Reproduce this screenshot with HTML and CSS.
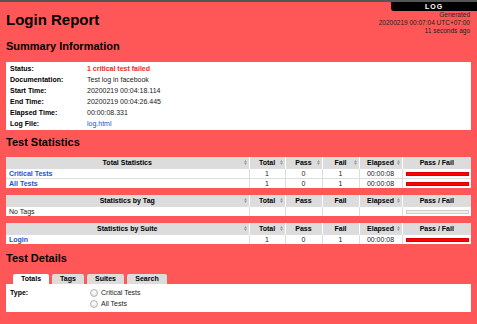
FILE: index.html
```html
<!DOCTYPE html>
<html lang="en">
<head>
    <meta charset="UTF-8">
    <title>Login Report</title>
    <link rel="stylesheet" href="styles.css">
</head>
<body>

<div class="header">
    <h1>Login Report</h1>
    <div class="meta">
        <div class="log-btn">LOG</div>
        <div class="generated">Generated<br>20200219 00:07:04 UTC+07:00<br>11 seconds ago</div>
    </div>
</div>

<div class="content">
    <h2 class="first">Summary Information</h2>
    <table class="summary">
        <tr><th>Status:</th><td class="status-fail">1 critical test failed</td></tr>
        <tr><th>Documentation:</th><td>Test log in facebook</td></tr>
        <tr><th>Start Time:</th><td>20200219 00:04:18.114</td></tr>
        <tr><th>End Time:</th><td>20200219 00:04:26.445</td></tr>
        <tr><th>Elapsed Time:</th><td>00:00:08.331</td></tr>
        <tr><th>Log File:</th><td><a href="#">log.html</a></td></tr>
    </table>

    <h2>Test Statistics</h2>
    <table class="stats">
        <colgroup>
            <col class="c-name"><col class="c-num"><col class="c-num2"><col class="c-num2"><col class="c-time"><col class="c-graph">
        </colgroup>
        <tr>
            <th><div class="hd"><span>Total Statistics</span><svg class="sort" viewBox="0 0 4 7"><path d="M0 3 2 0 4 3Z M0 4 2 7 4 4Z"/></svg></div></th>
            <th><div class="hd"><span>Total</span><svg class="sort" viewBox="0 0 4 7"><path d="M0 3 2 0 4 3Z M0 4 2 7 4 4Z"/></svg></div></th>
            <th><div class="hd"><span>Pass</span><svg class="sort" viewBox="0 0 4 7"><path d="M0 3 2 0 4 3Z M0 4 2 7 4 4Z"/></svg></div></th>
            <th><div class="hd"><span>Fail</span><svg class="sort" viewBox="0 0 4 7"><path d="M0 3 2 0 4 3Z M0 4 2 7 4 4Z"/></svg></div></th>
            <th><div class="hd"><span>Elapsed</span><svg class="sort" viewBox="0 0 4 7"><path d="M0 3 2 0 4 3Z M0 4 2 7 4 4Z"/></svg></div></th>
            <th>Pass / Fail</th>
        </tr>
        <tr>
            <td class="name"><a href="#">Critical Tests</a></td>
            <td>1</td><td>0</td><td>1</td><td>00:00:08</td>
            <td><div class="bar fail"></div></td>
        </tr>
        <tr>
            <td class="name"><a href="#">All Tests</a></td>
            <td>1</td><td>0</td><td>1</td><td>00:00:08</td>
            <td><div class="bar fail"></div></td>
        </tr>
    </table>

    <table class="stats next">
        <colgroup>
            <col class="c-name"><col class="c-num"><col class="c-num2"><col class="c-num2"><col class="c-time"><col class="c-graph">
        </colgroup>
        <tr>
            <th><div class="hd"><span>Statistics by Tag</span><svg class="sort" viewBox="0 0 4 7"><path d="M0 3 2 0 4 3Z M0 4 2 7 4 4Z"/></svg></div></th>
            <th><div class="hd"><span>Total</span><svg class="sort" viewBox="0 0 4 7"><path d="M0 3 2 0 4 3Z M0 4 2 7 4 4Z"/></svg></div></th>
            <th>Pass</th>
            <th>Fail</th>
            <th><div class="hd"><span>Elapsed</span><svg class="sort" viewBox="0 0 4 7"><path d="M0 3 2 0 4 3Z M0 4 2 7 4 4Z"/></svg></div></th>
            <th>Pass / Fail</th>
        </tr>
        <tr>
            <td class="name plain">No Tags</td>
            <td></td><td></td><td></td><td></td>
            <td><div class="bar empty"></div></td>
        </tr>
    </table>

    <table class="stats next">
        <colgroup>
            <col class="c-name"><col class="c-num"><col class="c-num2"><col class="c-num2"><col class="c-time"><col class="c-graph">
        </colgroup>
        <tr>
            <th><div class="hd"><span>Statistics by Suite</span><svg class="sort" viewBox="0 0 4 7"><path d="M0 3 2 0 4 3Z M0 4 2 7 4 4Z"/></svg></div></th>
            <th><div class="hd"><span>Total</span><svg class="sort" viewBox="0 0 4 7"><path d="M0 3 2 0 4 3Z M0 4 2 7 4 4Z"/></svg></div></th>
            <th>Pass</th>
            <th>Fail</th>
            <th><div class="hd"><span>Elapsed</span><svg class="sort" viewBox="0 0 4 7"><path d="M0 3 2 0 4 3Z M0 4 2 7 4 4Z"/></svg></div></th>
            <th>Pass / Fail</th>
        </tr>
        <tr>
            <td class="name"><a href="#">Login</a></td>
            <td>1</td><td>0</td><td>1</td><td>00:00:08</td>
            <td><div class="bar fail"></div></td>
        </tr>
    </table>

    <h2 class="details">Test Details</h2>
    <div class="tabs">
        <div class="tab active t-totals">Totals</div>
        <div class="tab t-tags">Tags</div>
        <div class="tab t-suites">Suites</div>
        <div class="tab t-search">Search</div>
    </div>
    <div class="panel">
        <div class="type-label">Type:</div>
        <div class="options">
            <div class="option"><span class="radio"></span>Critical Tests</div>
            <div class="option"><span class="radio"></span>All Tests</div>
        </div>
    </div>
</div>

</body>
</html>
```

FILE: styles.css
```css
body {
    margin: 0;
    border-top: 2px solid #555;
    background-color: #ff5757;
    font-family: "Liberation Sans", Arial, sans-serif;
    color: #000;
}
a {
    color: #1d55c9;
    text-decoration: none;
}
.header {
    display: flex;
    justify-content: space-between;
    align-items: flex-start;
}
h1 {
    margin: 9px 0 0 6px;
    font-size: 15px;
    line-height: 17px;
}
.meta {
    display: flex;
    flex-direction: column;
    align-items: flex-end;
}
.log-btn {
    width: 86px;
    height: 9px;
    line-height: 9px;
    background-color: #000;
    color: #fff;
    font-size: 7px;
    font-weight: bold;
    letter-spacing: 1px;
    text-align: center;
    border-bottom-left-radius: 3px;
}
.generated {
    padding-right: 7px;
    font-size: 6.5px;
    line-height: 8px;
    text-align: right;
    color: #222;
}
.content {
    padding: 0 6px;
}
h2 {
    margin: 6px 0 8px;
    font-size: 11px;
    line-height: 13px;
}
h2.first {
    margin-top: 5px;
    margin-bottom: 9px;
}
h2.details {
    margin-top: 8px;
    margin-bottom: 9px;
}

/* summary */
.summary {
    width: 100%;
    background-color: #fff;
    border: 1px solid #fff;
    border-spacing: 0;
    font-size: 7px;
}
.summary th, .summary td {
    height: 11px;
    padding: 0;
    text-align: left;
    white-space: nowrap;
}
.summary th {
    width: 77px;
    padding-left: 3px;
}
.summary td {
    color: #222;
}
.summary .status-fail {
    color: #f22;
    font-weight: bold;
}

/* statistics */
.stats {
    width: 100%;
    table-layout: fixed;
    border-collapse: collapse;
    background-color: #fff;
    font-size: 7px;
}
.stats.next {
    margin-top: 7px;
}
.c-name { width: 243px; }
.c-num { width: 36px; }
.c-num2 { width: 37px; }
.c-time { width: 43px; }
.c-graph { width: 69px; }
.stats th {
    height: 11px;
    padding: 0;
    background-color: #dcdcdc;
    border-left: 1px solid #fff;
    font-weight: bold;
    text-align: center;
}
.stats th:first-child {
    border-left: none;
}
.hd {
    display: grid;
    grid-template-columns: 1fr auto 1fr;
    align-items: center;
}
.hd span {
    grid-column: 2;
    white-space: nowrap;
}
.sort {
    grid-column: 3;
    justify-self: end;
    width: 3px;
    height: 5px;
    margin-right: 2px;
    fill: #9a9a9a;
}
.stats td {
    height: 9px;
    padding: 0;
    border-top: 1px solid #ddd;
    border-left: 1px solid #ddd;
    text-align: center;
    color: #222;
}
.stats td:first-child {
    border-left: none;
}
.stats td.name {
    padding-left: 3px;
    text-align: left;
    font-weight: bold;
}
.stats td.plain {
    font-weight: normal;
}
.bar {
    height: 4px;
    margin: 0 2px 0 3px;
    box-sizing: border-box;
}
.bar.fail {
    background-color: #f00;
    border: 1px solid #d00;
}
.bar.empty {
    background-color: #f0f0f0;
    border: 1px solid #ccc;
}

/* details */
.tabs {
    display: flex;
    gap: 3px;
    padding-left: 7px;
}
.tab {
    height: 10px;
    line-height: 10px;
    background-color: #dcdcdc;
    font-size: 7px;
    font-weight: bold;
    text-align: center;
    border-radius: 2px 2px 0 0;
}
.tab.active {
    background-color: #fff;
}
.t-totals { width: 36px; }
.t-tags { width: 32px; }
.t-suites { width: 37px; }
.t-search { width: 40px; }
.panel {
    display: grid;
    grid-template-columns: 80px 1fr;
    height: 28px;
    box-sizing: border-box;
    padding: 3px 4px;
    background-color: #fff;
    font-size: 7px;
    line-height: 11px;
}
.type-label {
    font-weight: bold;
}
.option {
    display: flex;
    align-items: center;
    gap: 3px;
    color: #222;
}
.radio {
    width: 6px;
    height: 6px;
    border: 1px solid #b5b5b5;
    border-radius: 50%;
    background: radial-gradient(circle at 50% 35%, #fff, #ddd);
}
```
